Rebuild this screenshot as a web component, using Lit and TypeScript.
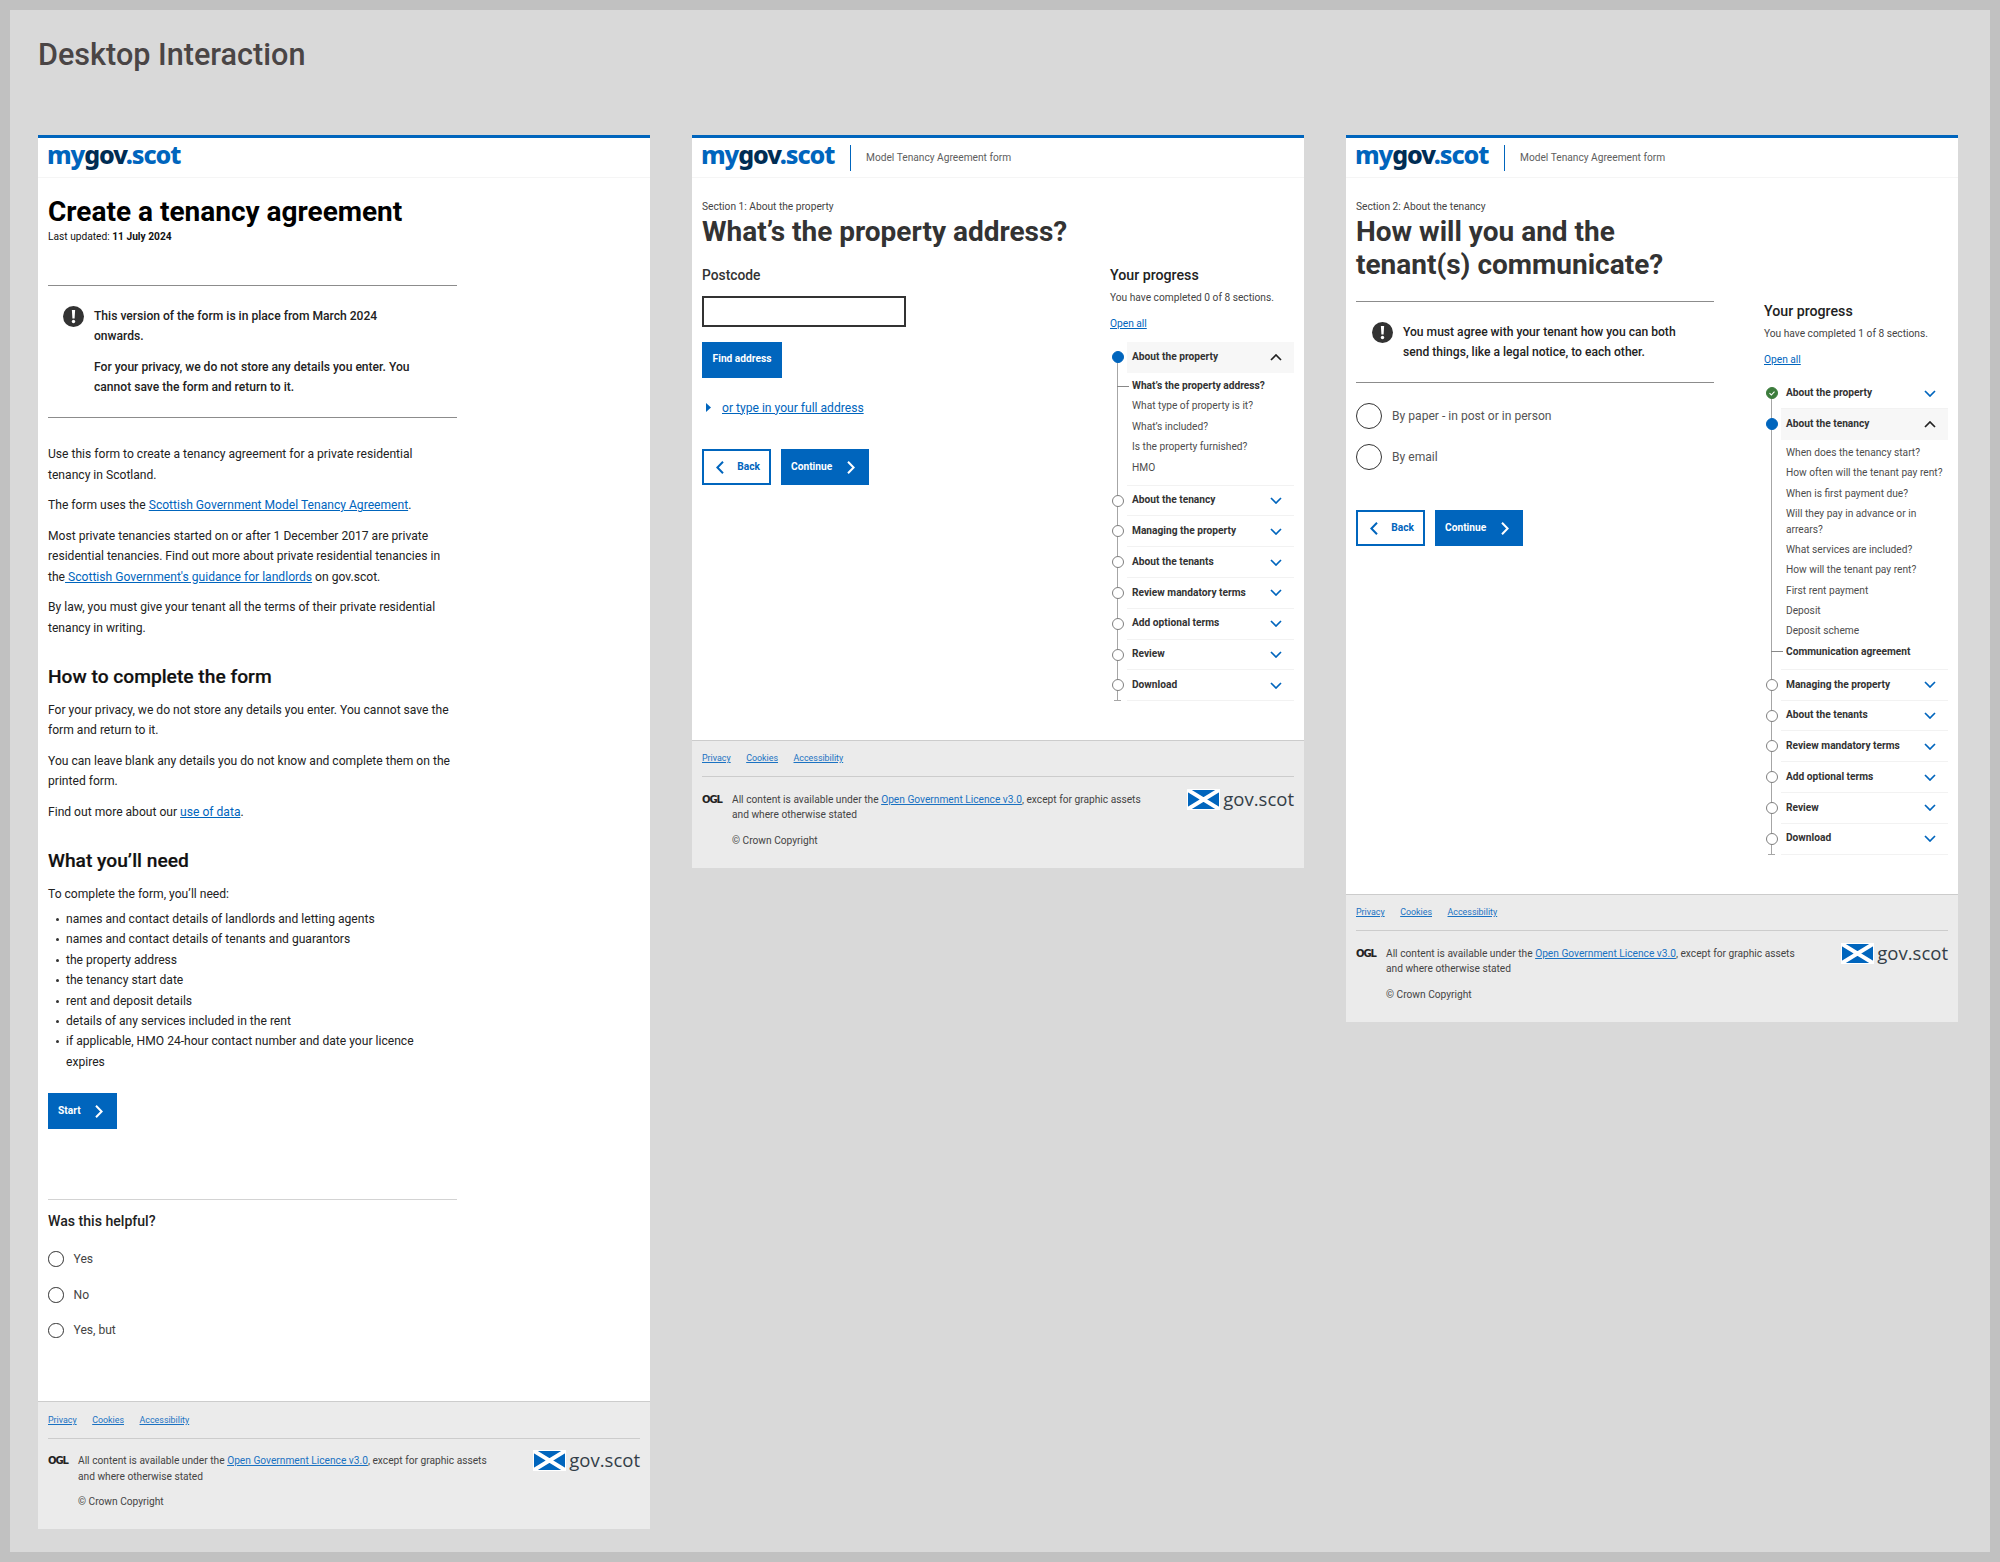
import { LitElement, html, css, svg } from "lit";
import { customElement } from "lit/decorators.js";

type Sec = { name: string; state: "done" | "active" | "todo"; items?: string[]; current?: string };

const names = ["Managing the property", "About the tenants", "Review mandatory terms", "Add optional terms", "Review", "Download"];
const rest: Sec[] = names.map((name) => ({ name, state: "todo" }));

const progressOne: Sec[] = [
  { name: "About the property", state: "active", current: "What’s the property address?", items: ["What’s the property address?", "What type of property is it?", "What’s included?", "Is the property furnished?", "HMO"] },
  { name: "About the tenancy", state: "todo" },
  ...rest,
];
const progressTwo: Sec[] = [
  { name: "About the property", state: "done" },
  { name: "About the tenancy", state: "active", current: "Communication agreement", items: ["When does the tenancy start?", "How often will the tenant pay rent?", "When is first payment due?", "Will they pay in advance or in arrears?", "What services are included?", "How will the tenant pay rent?", "First rent payment", "Deposit", "Deposit scheme", "Communication agreement"] },
  ...rest,
];

const chevDown = svg`<path d="M1 1l5 5 5-5" fill="none" stroke="currentColor" stroke-width="1.7"/>`;
const chevUp = svg`<path d="M1 6l5-5 5 5" fill="none" stroke="currentColor" stroke-width="1.7"/>`;

@customElement("app-root")
export class AppRoot extends LitElement {
  static styles = css`
    :host { display: block; background: #c1c1c1; padding: 10px; height: 1562px; box-sizing: border-box; font-family: Roboto, "Noto Sans", sans-serif; color: #333; font-size: 12.1px; line-height: 20.4px; }
    * { box-sizing: border-box; }
    .frame { background: #d9d9d9; height: 1542px; padding: 25px 28px 0; overflow: hidden; }
    .title { margin: 0 0 60px; font-size: 30.6px; line-height: 40px; font-weight: 500; color: #4a4545; }
    .panels { display: grid; grid-template-columns: repeat(3, 612px); column-gap: 42px; align-items: start; }
    .panel { background: #fff; border-top: 3px solid #0065bd; display: flex; flex-direction: column; }
    .head { height: 40px; display: flex; align-items: center; padding: 0 10px 0 9px; border-bottom: 1px solid #f5f5f5; }
    .logo { font-family: "Noto Sans", sans-serif; font-weight: 800; font-size: 25px; letter-spacing: -1.1px; line-height: 30px; color: #0065bd; margin-top: -7px; width: 134px; white-space: nowrap; }
    .logo b { color: #002d54; font-weight: 800; }
    .site { margin-left: 15px; padding-left: 15px; border-left: 1px solid #0065bd; height: 26px; line-height: 26px; font-size: 10.2px; color: #5e5e5e; }
    main { padding: 0 10px; }
    h1 { margin: 0; font-size: 28px; line-height: 33px; font-weight: 700; color: #333; }
    h1.wrap { width: 358px; }
    .h1-start { margin: 16px 0 0; color: #000; line-height: 35px; font-size: 28px; font-weight: 700; }
    .updated { font-size: 10.2px; line-height: 15.6px; color: #111; }
    .updated b { font-weight: 700; }
    .rule { border: 0; height: 1px; background: #8c8c8c; margin: 0; width: 100%; }
    .col { width: 409px; }
    .mt40 { margin-top: 40px; }
    .callout { display: flex; gap: 10px; padding: 20px 0 20px 15px; font-weight: 500; color: #222; }
    .callout p { margin: 0 0 10.2px; }
    .callout p:last-child { margin: 0; }
    .callout .txt { width: 330px; }
    .callout.narrow { padding-left: 16px; }
    .callout.narrow .txt { width: 300px; }
    .alert { width: 21px; height: 21px; flex: none; display: block; }
    .body { margin-top: 26px; color: #222; }
    .body p { margin: 0 0 10.2px; }
    a { color: #0065bd; text-decoration: underline; }
    h2 { margin: 25px 0 9.5px; font-size: 19.2px; line-height: 27px; font-weight: 500; color: #111; -webkit-text-stroke: 0.2px #111; }
    ul { margin: -5.2px 0 0; padding: 0 20px 0 18px; list-style: none; }
    li { position: relative; }
    li::before { content: ""; position: absolute; left: -10px; top: 9px; width: 3px; height: 3px; border-radius: 50%; background: #333; }
    .btn { display: inline-flex; align-items: center; justify-content: space-between; height: 36px; background: #0065bd; color: #fff; border: 1px solid #0065bd; font-weight: 700; font-size: 10.2px; padding: 0 13px 0 9px; }
    .btn svg { width: 8px; height: 13px; display: block; flex: none; }
    .btn.start { width: 69px; margin-top: 21px; }
    .btn.find { width: 80px; padding: 0; justify-content: center; }
    .btn.next { width: 88px; }
    .btn.back { width: 69px; background: #fff; color: #0065bd; border-width: 2px; padding: 0 9px 0 12px; }
    .btns { display: flex; gap: 10px; }
    .feedback { margin-top: 70px; border-top: 1px solid #d3d3d3; padding: 11px 0 53px; width: 409px; }
    .fb-title { font-size: 14.1px; line-height: 20px; font-weight: 500; color: #222; margin-bottom: 10px; }
    .radio-s { display: flex; align-items: center; height: 35.7px; gap: 10px; color: #444; }
    .ring { width: 15.5px; height: 15.5px; border: 1.4px solid #333; border-radius: 50%; flex: none; background: #fff; }
    .radio-l { display: flex; align-items: center; height: 26px; gap: 10px; color: #555; margin-bottom: 15px; }
    .radio-l .ring { width: 26px; height: 26px; }
    .foot { background: #ebebeb; border-top: 1px solid #ccc; padding: 7.5px 10px 0; height: 128px; font-size: 10.2px; line-height: 15.3px; color: #444; }
    .foot-links { display: flex; gap: 15.5px; height: 20px; line-height: 20px; font-size: 8.9px; }
    .foot-links a { color: #1a72c2; }
    .foot-rule { height: 1px; background: #ccc; margin-top: 8px; }
    .foot-row { display: flex; margin-top: 14.5px; }
    .ogl { width: 30px; flex: none; font-family: "DejaVu Sans", sans-serif; font-weight: 700; font-size: 10px; letter-spacing: -1.1px; line-height: 15.3px; color: #222; }
    .lic { width: 420px; }
    .lic p { margin: 0 0 10.5px; }
    .lic a { color: #1a72c2; }
    .gov { margin-left: auto; display: flex; gap: 3px; align-items: center; height: 21px; margin-top: -3px; }
    .gov svg { width: 33px; height: 21px; display: block; }
    .gov span { font-family: "Open Sans", sans-serif; font-size: 18.5px; line-height: 21px; color: #333e48; margin-top: -2px; }
    .sect { margin-top: 21px; font-size: 10.2px; line-height: 15.6px; color: #444; }
    .grid { display: grid; grid-template-columns: 358px 184px; column-gap: 50px; align-items: start; }
    .form-one { padding-top: 17px; }
    .label { font-weight: 500; font-size: 13.8px; line-height: 20px; color: #333; }
    .input { width: 204px; height: 31px; border: 2px solid #333; margin-top: 11px; background: #fff; }
    .find-wrap { margin-top: 15px; }
    .manual { margin: 20px 0 31px; display: flex; align-items: center; gap: 11px; padding-left: 4px; }
    .manual svg { width: 5px; height: 9px; display: block; }
    .side { padding-top: 17.5px; padding-bottom: 38.5px; }
    .side.low { padding-top: 20.5px; padding-bottom: 39px; }
    .prog-title { font-size: 14.2px; line-height: 20px; font-weight: 500; color: #222; }
    .prog-note { font-size: 10.2px; line-height: 15.6px; margin-top: 5px; color: #444; }
    .open { display: block; font-size: 10.2px; line-height: 15.6px; margin-top: 10px; }
    .steps { position: relative; margin-top: 11px; padding-left: 17px; }
    .steps::before { content: ""; position: absolute; left: 7px; top: 15px; bottom: 0; width: 1px; background: #a6a6a6; }
    .steps::after { content: ""; position: absolute; left: 4px; bottom: 0; width: 7px; height: 1px; background: #a6a6a6; }
    .step { position: relative; }
    .row { height: 30.8px; display: flex; align-items: center; justify-content: space-between; padding: 0 6px 0 5px; font-size: 10.2px; font-weight: 700; color: #333; border-bottom: 1px solid #f2f2f2; }
    .row svg { width: 12px; height: 7px; display: block; margin-right: 6px; color: #0065bd; }
    .active > .row { background: #f7f7f7; border-bottom: 0; }
    .active > .row svg { color: #222; }
    .dot { position: absolute; left: -15.5px; top: 9px; width: 12px; height: 12px; border-radius: 50%; background: #fff; border: 1.2px solid #7f7f7f; }
    .active > .dot { background: #0065bd; border-color: #0065bd; }
    .done > .dot { background: #3c7c3c; border-color: #3c7c3c; }
    .dot svg { display: block; width: 100%; height: 100%; }
    .items { padding: 2.6px 0 7px 5px; border-bottom: 1px solid #f2f2f2; font-size: 10.2px; line-height: 15.6px; color: #4d4d4d; }
    .item { padding: 2.4px 0; position: relative; }
    .item.cur { font-weight: 700; color: #333; }
    .item.cur::before { content: ""; position: absolute; left: -15px; top: 10px; width: 12px; height: 1px; background: #888; }
    .t2 { margin-top: 20px; }
    .opts { padding-top: 20px; }
    .opts + .btns { margin-top: 40px; }
  `;

  alert() {
    return html`<svg class="alert" viewBox="0 0 21 21"><circle cx="10.5" cy="10.5" r="10.5" fill="#333"/><path d="M8.9 4h3.2l-.5 8.5H9.4z" fill="#fff"/><circle cx="10.5" cy="15.5" r="1.7" fill="#fff"/></svg>`;
  }
  chevR() {
    return html`<svg viewBox="0 0 8 13"><path d="M1 .8l5.6 5.7L1 12.2" fill="none" stroke="currentColor" stroke-width="2"/></svg>`;
  }
  chevL() {
    return html`<svg viewBox="0 0 8 13"><path d="M7 .8L1.4 6.5 7 12.2" fill="none" stroke="currentColor" stroke-width="2"/></svg>`;
  }
  footer() {
    return html`<footer class="foot">
      <div class="foot-links"><a>Privacy</a><a>Cookies</a><a>Accessibility</a></div>
      <div class="foot-rule"></div>
      <div class="foot-row">
        <div class="ogl">OGL</div>
        <div class="lic">
          <p>All content is available under the <a>Open Government Licence v3.0</a>, except for graphic assets and where otherwise stated</p>
          <p>© Crown Copyright</p>
        </div>
        <div class="gov">
          <svg viewBox="0 0 33 21"><rect width="33" height="21" fill="#fff"/><rect x="1" y="1" width="31" height="19" fill="#0065bd"/><path d="M1 1l31 19M32 1L1 20" stroke="#fff" stroke-width="4"/></svg>
          <span>gov.scot</span>
        </div>
      </div>
    </footer>`;
  }
  header(site: boolean) {
    return html`<header class="head">
      <div class="logo">my<b>gov</b>.scot</div>
      ${site ? html`<div class="site">Model Tenancy Agreement form</div>` : ""}
    </header>`;
  }
  steps(list: Sec[]) {
    return html`<div class="steps">
      ${list.map((s) => html`<div class="step ${s.state}">
        <span class="dot">${s.state === "done" ? html`<svg viewBox="0 0 12 12"><path d="M3 6.2l2.2 2.2L9 4.4" fill="none" stroke="#fff" stroke-width="1.3"/></svg>` : ""}</span>
        <div class="row"><span>${s.name}</span><svg viewBox="0 0 12 7">${s.state === "active" ? chevUp : chevDown}</svg></div>
        ${s.items ? html`<div class="items">${s.items.map((i) => html`<div class="item ${i === s.current ? "cur" : ""}">${i}</div>`)}</div>` : ""}
      </div>`)}
    </div>`;
  }
  side(done: number, list: Sec[], low: boolean) {
    return html`<aside class="side ${low ? "low" : ""}">
      <div class="prog-title">Your progress</div>
      <div class="prog-note">You have completed ${done} of 8 sections.</div>
      <a class="open">Open all</a>
      ${this.steps(list)}
    </aside>`;
  }
  render() {
    return html`<div class="frame">
      <h3 class="title">Desktop Interaction</h3>
      <div class="panels">
        <section class="panel">
          ${this.header(false)}
          <main>
            <h1 class="h1-start">Create a tenancy agreement</h1>
            <div class="updated">Last updated: <b>11 July 2024</b></div>
            <div class="col">
              <hr class="rule mt40" />
              <div class="callout">
                ${this.alert()}
                <div class="txt">
                  <p>This version of the form is in place from March 2024 onwards.</p>
                  <p>For your privacy, we do not store any details you enter. You cannot save the form and return to it.</p>
                </div>
              </div>
              <hr class="rule" />
              <div class="body">
                <p>Use this form to create a tenancy agreement for a private residential tenancy in Scotland.</p>
                <p>The form uses the <a>Scottish Government Model Tenancy Agreement</a>.</p>
                <p>Most private tenancies started on or after 1 December 2017 are private residential tenancies. Find out more about private residential tenancies in the<a> Scottish Government's guidance for landlords</a> on gov.scot.</p>
                <p>By law, you must give your tenant all the terms of their private residential tenancy in writing.</p>
                <h2>How to complete the form</h2>
                <p>For your privacy, we do not store any details you enter. You cannot save the form and return to it.</p>
                <p>You can leave blank any details you do not know and complete them on the printed form.</p>
                <p>Find out more about our <a>use of data</a>.</p>
                <h2>What you’ll need</h2>
                <p>To complete the form, you’ll need:</p>
                <ul>
                  <li>names and contact details of landlords and letting agents</li>
                  <li>names and contact details of tenants and guarantors</li>
                  <li>the property address</li>
                  <li>the tenancy start date</li>
                  <li>rent and deposit details</li>
                  <li>details of any services included in the rent</li>
                  <li>if applicable, HMO 24-hour contact number and date your licence expires</li>
                </ul>
                <div class="btn start">Start ${this.chevR()}</div>
              </div>
              <div class="feedback">
                <div class="fb-title">Was this helpful?</div>
                <div class="radio-s"><span class="ring"></span>Yes</div>
                <div class="radio-s"><span class="ring"></span>No</div>
                <div class="radio-s"><span class="ring"></span>Yes, but</div>
              </div>
            </div>
          </main>
          ${this.footer()}
        </section>

        <section class="panel">
          ${this.header(true)}
          <main>
            <div class="sect">Section 1: About the property</div>
            <h1>What’s the property address?</h1>
            <div class="grid">
              <div class="form-one">
                <div class="label">Postcode</div>
                <div class="input"></div>
                <div class="find-wrap"><div class="btn find">Find address</div></div>
                <div class="manual">
                  <svg viewBox="0 0 5 9"><path d="M0 0l5 4.5L0 9z" fill="#0065bd"/></svg>
                  <a>or type in your full address</a>
                </div>
                <div class="btns">
                  <div class="btn back">${this.chevL()} Back</div>
                  <div class="btn next">Continue ${this.chevR()}</div>
                </div>
              </div>
              ${this.side(0, progressOne, false)}
            </div>
          </main>
          ${this.footer()}
        </section>

        <section class="panel">
          ${this.header(true)}
          <main>
            <div class="sect">Section 2: About the tenancy</div>
            <h1 class="wrap">How will you and the tenant(s) communicate?</h1>
            <div class="grid">
              <div class="t2">
                <hr class="rule" />
                <div class="callout narrow">
                  ${this.alert()}
                  <div class="txt"><p>You must agree with your tenant how you can both send things, like a legal notice, to each other.</p></div>
                </div>
                <hr class="rule" />
                <div class="opts">
                  <div class="radio-l"><span class="ring"></span>By paper - in post or in person</div>
                  <div class="radio-l"><span class="ring"></span>By email</div>
                </div>
                <div class="btns">
                  <div class="btn back">${this.chevL()} Back</div>
                  <div class="btn next">Continue ${this.chevR()}</div>
                </div>
              </div>
              ${this.side(1, progressTwo, true)}
            </div>
          </main>
          ${this.footer()}
        </section>
      </div>
    </div>`;
  }
}
